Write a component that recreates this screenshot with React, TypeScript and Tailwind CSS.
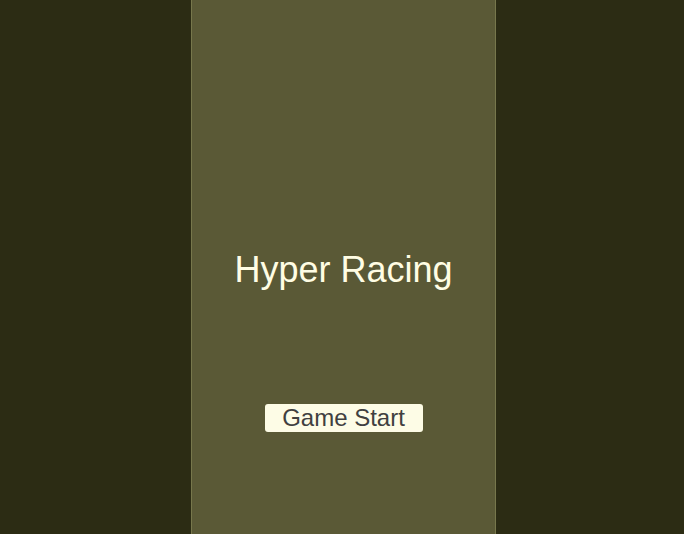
import React from 'react';

export default function App() {
  return (
    <div
      className="flex h-[534px] w-[684px] justify-center bg-[#2c2c14] overflow-hidden"
      style={{ fontFamily: '"Liberation Sans", Arial, sans-serif' }}
    >
      <div className="ml-[3px] flex h-full w-[305px] flex-col items-center border-x border-[#77774c] bg-[#5a5936] pt-[252px]">
        <h1 className="h-[36px] text-[36px] leading-[36px] text-[#fffde4]">Hyper Racing</h1>
        <button className="mt-[116px] h-[28px] w-[158px] rounded-[3px] bg-[#fdfce6] text-[24px] leading-[28px] text-[#404040]">
          Game Start
        </button>
      </div>
    </div>
  );
}
